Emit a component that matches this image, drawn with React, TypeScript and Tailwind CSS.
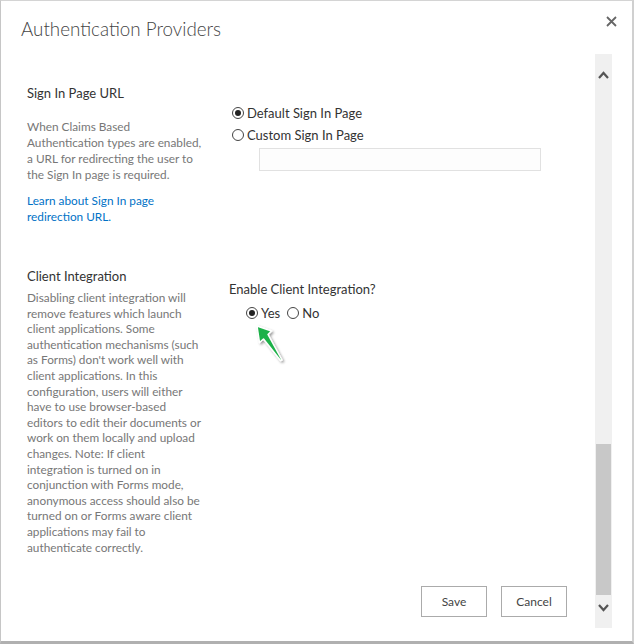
import React from 'react';

const font = { fontFamily: 'Lato, "Open Sans", sans-serif' };

function Radio({ checked, label }: { checked?: boolean; label: string }) {
  return (
    <span className="flex items-center gap-[3px] whitespace-nowrap text-[13px] leading-[18px] text-[#333]">
      <span className="flex h-[12px] w-[12px] items-center justify-center rounded-full border border-[#444] bg-white">
        {checked && <span className="h-[6px] w-[6px] rounded-full bg-[#222]" />}
      </span>
      {label}
    </span>
  );
}

function Scrollbar() {
  return (
    <div className="flex w-[17px] shrink-0 flex-col bg-[#f0f0f0]">
      <div className="flex h-[32px] items-start justify-center pt-[17px]">
        <svg width="11" height="8" viewBox="0 0 11 8">
          <path d="M1 7 L5.5 2 L10 7" fill="none" stroke="#555" strokeWidth="2.2" />
        </svg>
      </div>
      <div className="flex-1" />
      <div className="mx-[1px] h-[151px] bg-[#c8c8c8]" />
      <div className="flex h-[33px] items-start justify-center pt-[9px]">
        <svg width="11" height="8" viewBox="0 0 11 8">
          <path d="M1 1 L5.5 6 L10 1" fill="none" stroke="#555" strokeWidth="2.2" />
        </svg>
      </div>
    </div>
  );
}

function Arrow() {
  return (
    <svg width="36" height="46" viewBox="0 0 36 46" className="ml-[25px] -mt-[2px]">
      <defs>
        <filter id="sh" x="-40%" y="-40%" width="180%" height="180%">
          <feDropShadow dx="1.5" dy="1.5" stdDeviation="1.3" floodColor="#000" floodOpacity="0.4" />
        </filter>
      </defs>
      <path
        d="M3 6 L17.5 11 L14 14.5 L28 40 L26.5 40.5 L9.5 19 L5.5 22.5 Z"
        fill="#1fb14a"
        stroke="#fff"
        strokeWidth="1.5"
        strokeLinejoin="round"
        filter="url(#sh)"
      />
    </svg>
  );
}

export default function App() {
  return (
    <div
      className="flex h-[644px] w-[634px] flex-col border-l border-t border-r-2 border-b-[3px] border-l-[#c6c6c6] border-t-[#d4d4d4] border-r-[#d0d0d0] border-b-[#b0b0b0] bg-white"
      style={font}
    >
      <div className="flex h-[53px] shrink-0 items-start justify-between pl-[20px] pr-[15px]">
        <h1 className="mt-[15px] whitespace-nowrap text-[18.8px] font-light leading-[26px] text-[#444]">Authentication Providers</h1>
        <svg width="11" height="11" viewBox="0 0 11 11" className="mt-[15px]">
          <path d="M1 1 L10 10 M10 1 L1 10" stroke="#666" strokeWidth="1.8" />
        </svg>
      </div>

      <div className="flex min-h-0 flex-1 pb-[13px]">
        <div className="flex min-w-0 flex-1 flex-col">
          {/* Sign In Page URL */}
          <div className="flex pt-[30px]">
            <div className="w-[205px] shrink-0 whitespace-nowrap pl-[26px]">
              <h3 className="text-[13px] leading-[18px] text-[#333]">Sign In Page URL</h3>
              <p className="mt-[17px] text-[11.8px] leading-[16px] text-[#777]">
                When Claims Based<br />
                Authentication types are enabled,<br />
                a URL for redirecting the user to<br />
                the Sign In page is required.
              </p>
              <a className="mt-[10px] block text-[11.8px] leading-[16px] text-[#0072c6]">
                Learn about Sign In page<br />
                redirection URL.
              </a>
            </div>
            <div className="flex flex-col pl-[26px] pt-[20px]">
              <Radio checked label="Default Sign In Page" />
              <div className="mt-[4px]">
                <Radio label="Custom Sign In Page" />
              </div>
              <div className="ml-[27px] mt-[4px] h-[23px] w-[282px] border border-[#e1e1e1] bg-[#fdfdfd]" />
            </div>
          </div>

          {/* Client Integration */}
          <div className="flex pt-[42px]">
            <div className="w-[205px] shrink-0 whitespace-nowrap pl-[26px]">
              <h3 className="text-[13px] leading-[18px] text-[#333]">Client Integration</h3>
              <p className="mt-[5px] text-[11.8px] leading-[15.6px] text-[#777]">
                Disabling client integration will<br />
                remove features which launch<br />
                client applications. Some<br />
                authentication mechanisms (such<br />
                as Forms) don't work well with<br />
                client applications. In this<br />
                configuration, users will either<br />
                have to use browser-based<br />
                editors to edit their documents or<br />
                work on them locally and upload<br />
                changes. Note: If client<br />
                integration is turned on in<br />
                conjunction with Forms mode,<br />
                anonymous access should also be<br />
                turned on or Forms aware client<br />
                applications may fail to<br />
                authenticate correctly.
              </p>
            </div>
            <div className="flex flex-col pl-[23px] pt-[13px]">
              <span className="whitespace-nowrap text-[13px] leading-[18px] text-[#333]">Enable Client Integration?</span>
              <div className="ml-[17px] mt-[6px] flex gap-[7px]">
                <Radio checked label="Yes" />
                <Radio label="No" />
              </div>
              <Arrow />
            </div>
          </div>

          <div className="flex-1" />
          <div className="mb-[11px] flex justify-end gap-[14px] pr-[28px]">
            <button className="h-[31px] w-[66px] border border-[#ababab] bg-white text-[12px] text-[#444]">Save</button>
            <button className="h-[31px] w-[66px] border border-[#ababab] bg-white text-[12px] text-[#444]">Cancel</button>
          </div>
        </div>
        <Scrollbar />
        <div className="w-[20px] shrink-0" />
      </div>
    </div>
  );
}
